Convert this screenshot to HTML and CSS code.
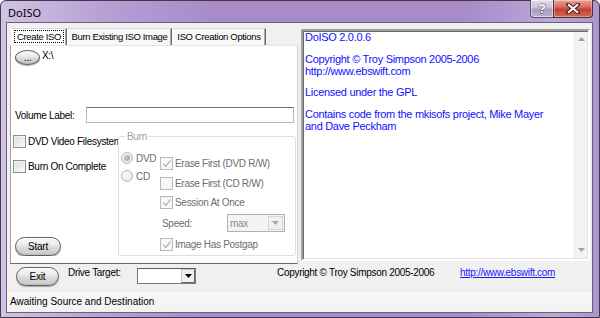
FILE: index.html
```html
<!DOCTYPE html>
<html>
<head>
<meta charset="utf-8">
<title>DoISO</title>
<link rel="stylesheet" href="styles.css">
</head>
<body>
<div class="window">
  <div class="titlebar">
    <span class="title">DoISO</span>
    <div class="caption-btns">
      <div class="cbtn help"><span>?</span></div>
      <div class="cbtn close">
        <svg width="14" height="11" viewBox="0 0 14 11"><path d="M2 1.5 L12 9.5 M12 1.5 L2 9.5" stroke="#4a2020" stroke-width="4" stroke-linecap="round"/><path d="M2.5 1.8 L11.5 9.2 M11.5 1.8 L2.5 9.2" stroke="#fff" stroke-width="2" stroke-linecap="round"/></svg>
      </div>
    </div>
  </div>
  <div class="client">
    <div class="main">
      <div class="tabs">
        <div class="tabstrip">
          <div class="tab active t1"><span class="focus">Create ISO</span></div>
          <div class="tab t2">Burn Existing ISO Image</div>
          <div class="tab t3">ISO Creation Options</div>
        </div>
        <div class="tabpanel">
          <div class="browse-row">
            <button class="pill browse">...</button>
            <span class="path">X:\</span>
          </div>
          <div class="vol-row">
            <span class="vol-label">Volume Label:</span>
            <div class="textbox"></div>
          </div>
          <div class="lower">
            <div class="leftcol">
              <div class="chk chk1"><span class="box"></span><span class="lbl">DVD Video Filesystem</span></div>
              <div class="chk chk2"><span class="box"></span><span class="lbl">Burn On Complete</span></div>
              <button class="pill start">Start</button>
            </div>
            <fieldset class="burn">
              <legend>Burn</legend>
              <div class="burn-body">
                <div class="radios">
                  <div class="radio r1"><span class="circle on"></span><span>DVD</span></div>
                  <div class="radio r2"><span class="circle"></span><span>CD</span></div>
                </div>
                <div class="checks">
                  <div class="dchk c1"><span class="dbox checked"></span><span>Erase First (DVD R/W)</span></div>
                  <div class="dchk c2"><span class="dbox"></span><span>Erase First (CD R/W)</span></div>
                  <div class="dchk c3"><span class="dbox checked"></span><span>Session At Once</span></div>
                  <div class="speed-row">
                    <span class="speed-lbl">Speed:</span>
                    <div class="dcombo"><span class="val">max</span><span class="darrow"><svg width="7" height="4" viewBox="0 0 7 4"><path d="M0 0 H7 L3.5 4 Z" fill="#a8a8a8"/></svg></span></div>
                  </div>
                  <div class="dchk c4"><span class="dbox checked"></span><span>Image Has Postgap</span></div>
                </div>
              </div>
            </fieldset>
          </div>
        </div>
      </div>
      <div class="rtb">
        <div class="rtb-text">
          <p>DoISO 2.0.0.6</p>
          <p>Copyright © Troy Simpson 2005-2006<br>http://www.ebswift.com</p>
          <p>Licensed under the GPL</p>
          <p>Contains code from the mkisofs project, Mike Mayer<br>and Dave Peckham</p>
        </div>
        <div class="vscroll">
          <svg width="7" height="4" viewBox="0 0 7 4"><path d="M0 4 H7 L3.5 0 Z" fill="#a0a0a0"/></svg>
          <svg width="7" height="4" viewBox="0 0 7 4"><path d="M0 0 H7 L3.5 4 Z" fill="#a0a0a0"/></svg>
        </div>
      </div>
    </div>
    <div class="bottom">
      <button class="pill exit">Exit</button>
      <span class="drive-lbl">Drive Target:</span>
      <div class="combo"><span class="cval"></span><span class="carrow"><svg width="7" height="4" viewBox="0 0 7 4"><path d="M0 0 H7 L3.5 4 Z" fill="#000"/></svg></span></div>
      <span class="copy">Copyright © Troy Simpson 2005-2006</span>
      <span class="link">http://www.ebswift.com</span>
    </div>
    <div class="status">Awaiting Source and Destination</div>
  </div>
</div>
</body>
</html>
```

FILE: styles.css
```css
* { box-sizing: border-box; }
html, body { margin: 0; padding: 0; }
body {
  width: 600px;
  height: 318px;
  overflow: hidden;
  font-family: "Liberation Sans", Arial, sans-serif;
  font-size: 10px;
  letter-spacing: -0.3px;
  color: #000;
  background: #fff;
}

.window {
  width: 600px;
  height: 318px;
  border: 1px solid #3f3a48;
  border-radius: 6px 6px 0 0;
  background: linear-gradient(to right, #d0c3e4 0%, #b79ed4 18%, #a98bca 35%, #a98bca 78%, #bba7d8 92%, #ae95cf 100%);
  display: flex;
  flex-direction: column;
  padding-bottom: 4px;
}

.titlebar {
  height: 21px;
  display: flex;
  align-items: flex-start;
  flex-shrink: 0;
}
.title {
  font-family: "Noto Sans", "Liberation Sans", sans-serif;
  font-size: 11px;
  letter-spacing: 0;
  line-height: 14px;
  padding: 5px 0 0 7px;
  color: #000;
}
.caption-btns {
  margin-left: auto;
  margin-right: 6px;
  display: flex;
}
.cbtn {
  height: 18px;
  margin-top: -1px;
  display: flex;
  align-items: center;
  justify-content: center;
  border: 1px solid #5d4f72;
  border-top: none;
}
.help {
  width: 23px;
  border-right: none;
  border-radius: 0 0 0 4px;
  background: linear-gradient(#e2dbec 0%, #cbc1da 45%, #a99cbd 55%, #bcafcf 100%);
  box-shadow: inset 0 0 0 1px rgba(255,255,255,0.5);
}
.help span {
  font-family: "Liberation Sans", sans-serif;
  font-weight: bold;
  font-size: 13px;
  color: #fff;
  letter-spacing: 0;
  -webkit-text-stroke: 0.8px #3d3350;
  paint-order: stroke fill;
  line-height: 13px;
}
.close {
  width: 40px;
  border-radius: 0 0 4px 0;
  border-color: #5a2b2b;
  background: linear-gradient(#e9a497 0%, #d66f60 40%, #c43f30 55%, #d06a58 100%);
  box-shadow: inset 0 0 0 1px rgba(255,255,255,0.35);
}

.client {
  flex: 1;
  margin: 0 6px 0 5px;
  border: 1px solid #6a6378;
  background: #f0f0f0;
  display: flex;
  flex-direction: column;
}

.main {
  height: 241px;
  flex-shrink: 0;
  display: flex;
  padding: 5px 0 0 3px;
}

.tabs {
  width: 288px;
  display: flex;
  flex-direction: column;
}
.tabstrip {
  height: 17px;
  display: flex;
  flex-shrink: 0;
}
.tab {
  height: 17px;
  line-height: 15px;
  text-align: center;
  white-space: nowrap;
  font-size: 9.5px;
  letter-spacing: -0.35px;
  background: #f7f7f7;
  border-top: 1px solid #d8d8d8;
  border-left: 1px solid #fff;
  border-right: 1px solid #6b6b6b;
  box-shadow: inset -1px 0 #a8a8a8;
}
.t1 { width: 56px; margin-left: 1px; background: #fff; padding: 1px 2px 2px 2px; }
.t2 { width: 105px; }
.t3 { width: 94px; }
.focus {
  display: block;
  height: 13px;
  line-height: 11px;
  border: 1px dotted #000;
}

.tabpanel {
  flex: 1;
  background: #fff;
  border: 1px solid;
  border-color: #e6e6e6 #d0d0d0 #6b6b6b #a0a0a0;
  display: flex;
  flex-direction: column;
}

.pill {
  font-family: "Liberation Sans", Arial, sans-serif;
  font-size: 10px;
  letter-spacing: -0.2px;
  color: #000;
  padding: 0;
  border: 1px solid #626262;
  border-radius: 10px;
  background: linear-gradient(#f6f6f6 0%, #ececec 40%, #dadada 55%, #c9c9c9 100%);
  box-shadow: inset 0 1px 0 #fff, inset 0 -1px 1px #b8b8b8, 0 1px 1px rgba(0,0,0,0.3);
}

.browse-row {
  display: flex;
  align-items: flex-start;
  padding: 4px 0 0 4px;
}
.browse {
  width: 25px;
  height: 15px;
  border-radius: 50%;
  line-height: 11px;
}
.path {
  margin-left: 2px;
  line-height: 12px;
}

.vol-row {
  display: flex;
  align-items: center;
  margin-top: 42px;
  padding-left: 4px;
}
.vol-label { width: 71px; }
.textbox {
  width: 208px;
  height: 16px;
  border: 1px solid #b5b8bd;
  border-top-color: #6f6f6f;
  background: #fff;
}

.lower {
  display: flex;
  margin-top: 7px;
}
.leftcol {
  width: 107px;
  padding-left: 2px;
  display: flex;
  flex-direction: column;
  align-items: flex-start;
  overflow: hidden;
  white-space: nowrap;
}
.chk {
  display: flex;
  align-items: center;
  height: 13px;
}
.chk1 { margin-top: 5px; }
.chk2 { margin-top: 12px; }
.box {
  width: 13px;
  height: 13px;
  flex-shrink: 0;
  border: 1px solid #8e8f8f;
  background: linear-gradient(135deg, #dcdcdc, #fbfbfb);
  box-shadow: inset 0 0 0 1px #f4f4f4;
  margin-right: 2px;
}
.start {
  width: 46px;
  height: 19px;
  margin: 64px 0 0 2px;
}

.burn {
  width: 178px;
  margin: 0;
  padding: 0 0 2px 0;
  border: 1px solid #d5dfe5;
  border-radius: 3px;
  min-width: 0;
}
.burn legend {
  color: #a0a0a0;
  margin-left: 6px;
  padding: 0 2px;
  line-height: 13px;
}
.burn-body {
  display: flex;
}
.radios {
  width: 41px;
  padding: 9px 0 0 2px;
  color: #6d6d6d;
}
.radio {
  display: flex;
  align-items: center;
  height: 12px;
}
.r2 { margin-top: 6px; }
.circle {
  width: 12px;
  height: 12px;
  border-radius: 50%;
  border: 1px solid #b8b8b8;
  background: radial-gradient(circle at 40% 40%, #fafafa, #e4e4e4);
  margin-right: 3px;
  flex-shrink: 0;
  display: flex;
  align-items: center;
  justify-content: center;
}
.circle.on::after {
  content: "";
  width: 6px;
  height: 6px;
  border-radius: 50%;
  background: radial-gradient(circle at 40% 40%, #c8c8c8, #9a9a9a);
}
.checks {
  padding-top: 14px;
  color: #6d6d6d;
  white-space: nowrap;
}
.dchk {
  display: flex;
  align-items: center;
  height: 13px;
}
.c2 { margin-top: 7px; }
.c3 { margin-top: 6px; }
.c4 { margin-top: 6px; }
.dbox {
  width: 13px;
  height: 13px;
  border: 1px solid #b8b8b8;
  background: #f7f7f7;
  margin-right: 2px;
  flex-shrink: 0;
  display: flex;
  align-items: center;
  justify-content: center;
}
.dbox.checked::after {
  content: "";
  width: 3px;
  height: 7px;
  border: solid #a6a6a6;
  border-width: 0 1.5px 1.5px 0;
  transform: rotate(40deg) translate(-1px, -1px);
}
.speed-row {
  display: flex;
  align-items: center;
  margin-top: 5px;
  height: 18px;
  padding-left: 2px;
}
.speed-lbl { width: 65px; }
.dcombo {
  width: 58px;
  height: 18px;
  border: 1px solid #adb2b5;
  background: #f4f4f4;
  display: flex;
  align-items: center;
}
.dcombo .val { padding-left: 2px; color: #8a8a8a; }
.darrow {
  margin-left: auto;
  width: 15px;
  height: 14px;
  margin-right: 1px;
  border: 1px solid #d4d4d4;
  background: #f0f0f0;
  display: flex;
  align-items: center;
  justify-content: center;
}

.rtb {
  width: 289px;
  height: 232px;
  margin: 1px 0 0 3px;
  border: 2px solid;
  border-color: #a0a0a0 #fff #fff #a0a0a0;
  box-shadow: inset 1px 1px #696969, inset -1px -1px #e3e3e3;
  background: #fff;
  display: flex;
}
.rtb-text {
  flex: 1;
  padding: 0 0 0 2px;
  color: #1010ff;
  font-size: 11px;
  letter-spacing: -0.3px;
  line-height: 12px;
  white-space: nowrap;
}
.rtb-text p { margin: 0 0 9.5px 0; }
.vscroll {
  width: 13px;
  margin: 1px 1px 1px 0;
  background: #f3f3f3;
  border-left: 1px solid #e9e9e9;
  display: flex;
  flex-direction: column;
  align-items: center;
  justify-content: space-between;
  padding: 5px 0 6px 0;
}

.bottom {
  height: 28px;
  flex-shrink: 0;
  display: flex;
  align-items: flex-start;
  padding-left: 9px;
}
.exit {
  width: 43px;
  height: 19px;
  margin-top: 3px;
}
.drive-lbl {
  width: 69px;
  margin: 3px 0 0 9px;
  line-height: 12px;
}
.combo {
  width: 59px;
  height: 16px;
  margin-top: 4px;
  border: 1px solid #7a7a7a;
  border-top-color: #5a5a5a;
  background: #fff;
  display: flex;
}
.carrow {
  margin-left: auto;
  width: 14px;
  height: 14px;
  background: #f0f0f0;
  border: 1px solid #c8c8c8;
  border-right-color: #6a6a6a;
  border-bottom-color: #6a6a6a;
  display: flex;
  align-items: center;
  justify-content: center;
}
.copy {
  width: 183px;
  margin: 3px 0 0 81px;
  line-height: 12px;
  white-space: nowrap;
}
.link {
  margin-top: 3px;
  line-height: 12px;
  color: #1a1aff;
  text-decoration: underline;
  white-space: nowrap;
}

.status {
  flex: 1;
  line-height: 20px;
  padding-left: 3px;
  letter-spacing: 0;
  background: linear-gradient(#f7f7f7, #f2f2f2);
}
```
